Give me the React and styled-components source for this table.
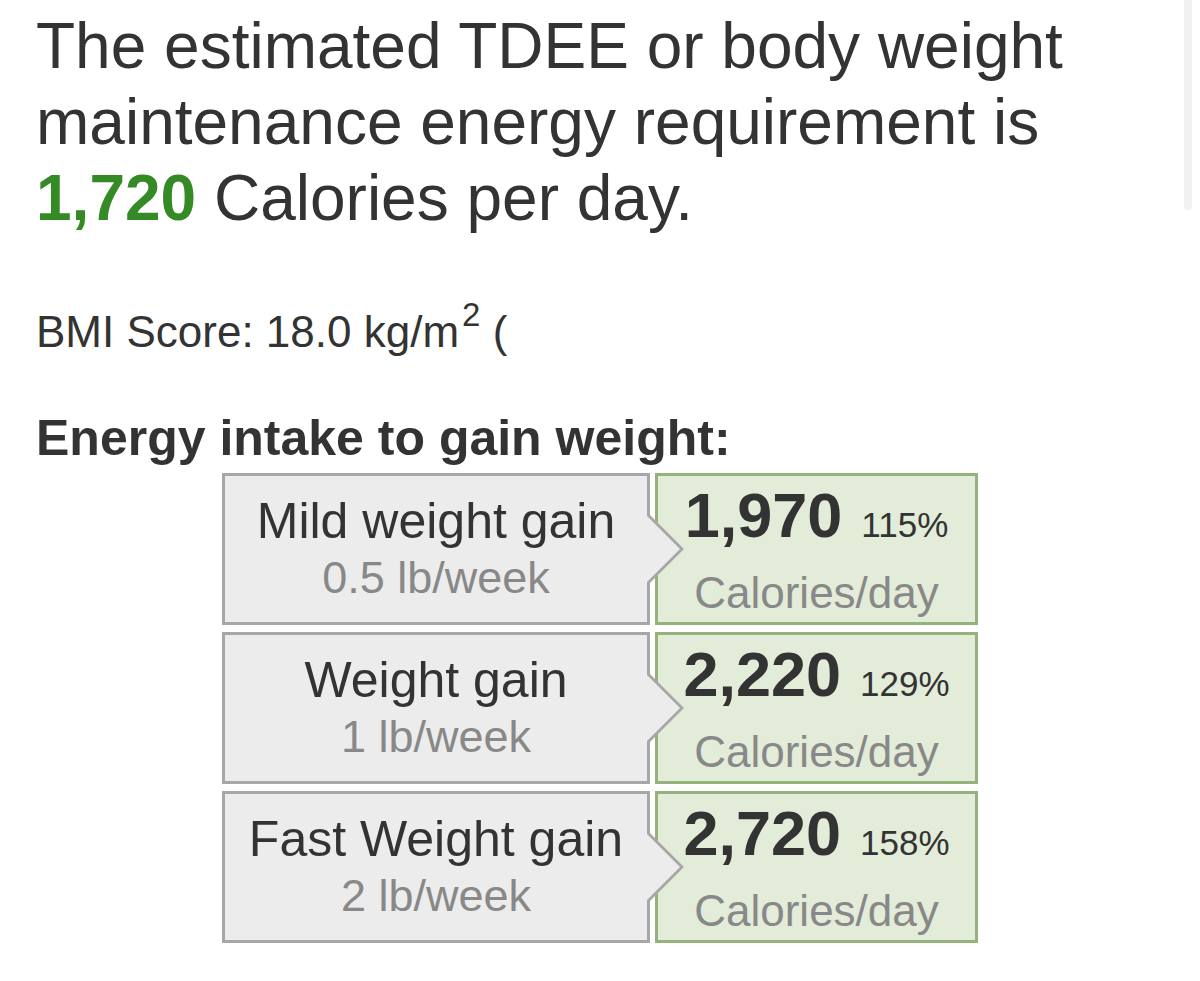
import React from 'react'
import styled, { createGlobalStyle } from 'styled-components'

const GlobalStyle = createGlobalStyle`
html, body {
margin:0;
padding:0;
background:#ffffff;
}
body {
font-family:"Liberation Sans", Arial, sans-serif;
color:#333333;
}
`

// page container
const Page = styled.main`
width:1200px;
padding:8px 36px 40px;
box-sizing:border-box;
`

// scrollbar thumb in the top right corner
const ScrollThumb = styled.div`
position:fixed;
top:0;
right:8px;
width:8px;
height:210px;
background:#f1f1f1;
border-radius:0 0 4px 4px;
`

const Headline = styled.h1`
margin:0;
font-size:64px;
line-height:76px;
font-weight:normal;
color:#333333;
`
const Green = styled.b`
color:#348a24;
`

const BmiLine = styled.p`
margin:71px 0 0;
font-size:44px;
line-height:50px;
`
const Sup = styled.sup`
font-size:33px;
line-height:0;
vertical-align:21px;
margin-left:3px;
`

const SectionTitle = styled.h2`
margin:52px 0 0;
font-size:50px;
line-height:58px;
font-weight:bold;
`

// result table
const Table = styled.section`
width:756px;
margin:6px auto 0;
display:flex;
flex-direction:column;
gap:7px;
`
const Row = styled.div`
display:grid;
grid-template-columns:428px 323px;
column-gap:5px;
height:152px;
`
const Label = styled.div`
position:relative;
z-index:1;
display:flex;
flex-direction:column;
justify-content:center;
align-items:center;
background:#ececec;
border:3px solid #a7a7a7;

&::before, &::after {
content:"";
position:absolute;
top:50%;
width:0;
height:0;
border-style:solid;
border-right:none;
}
&::before {
left:100%;
margin-top:-37px;
border-width:37px 0 37px 37px;
border-color:transparent transparent transparent #a7a7a7;
}
&::after {
left:calc(100% - 3px);
margin-top:-36px;
border-width:36px 0 36px 36px;
border-color:transparent transparent transparent #ececec;
}
`
const LabelTitle = styled.div`
font-size:50px;
line-height:56px;
color:#333333;
white-space:nowrap;
`
const LabelSub = styled.div`
font-size:45px;
line-height:57px;
color:#888888;
`
const Result = styled.div`
display:flex;
flex-direction:column;
justify-content:center;
align-items:center;
background:#e2ecd8;
border:3px solid #93b27c;
`
const Amount = styled.div`
font-size:63px;
line-height:77px;
font-weight:bold;
color:#333333;
white-space:nowrap;
`
const Percent = styled.span`
font-size:35px;
font-weight:normal;
margin-left:19px;
`
const Unit = styled.div`
font-size:44px;
line-height:59px;
color:#888888;
`

const rows = [
  { title: 'Mild weight gain', rate: '0.5 lb/week', kcal: '1,970', pct: '115%' },
  { title: 'Weight gain', rate: '1 lb/week', kcal: '2,220', pct: '129%' },
  { title: 'Fast Weight gain', rate: '2 lb/week', kcal: '2,720', pct: '158%' },
]

const App = () => {
  return (
    <>
      <GlobalStyle />
      <ScrollThumb />
      <Page>
        <Headline>
          The estimated TDEE or body weight<br />
          maintenance energy requirement is<br />
          <Green>1,720</Green> Calories per day.
        </Headline>

        <BmiLine>BMI Score: 18.0 kg/m<Sup>2</Sup> (</BmiLine>

        <SectionTitle>Energy intake to gain weight:</SectionTitle>

        <Table>
          {rows.map((r) => (
            <Row key={r.title}>
              <Label>
                <LabelTitle>{r.title}</LabelTitle>
                <LabelSub>{r.rate}</LabelSub>
              </Label>
              <Result>
                <Amount>
                  {r.kcal}
                  <Percent>{r.pct}</Percent>
                </Amount>
                <Unit>Calories/day</Unit>
              </Result>
            </Row>
          ))}
        </Table>
      </Page>
    </>
  )
}

export default App
